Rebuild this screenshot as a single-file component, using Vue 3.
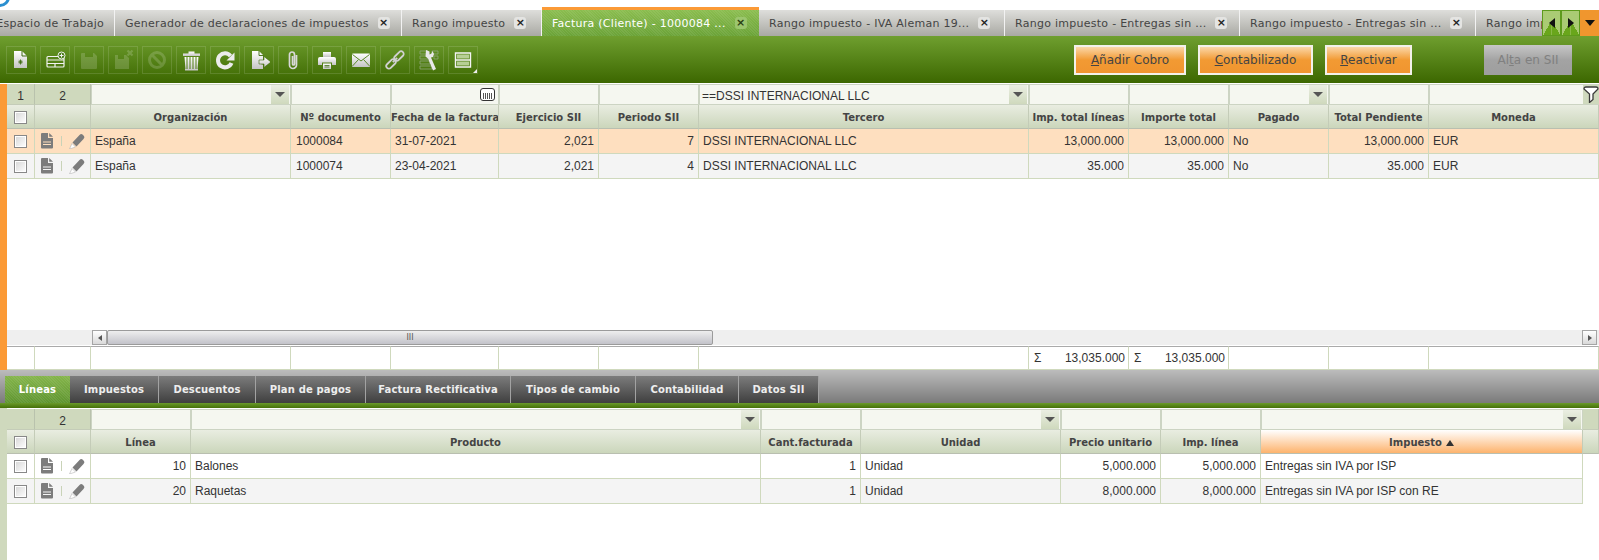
<template>
  <div class="page">
    <svg class="defs" width="0" height="0">
      <defs>
        <linearGradient id="ig" x1="0" y1="0" x2="0" y2="1">
          <stop offset="0" stop-color="#ffffff" />
          <stop offset="1" stop-color="#c4c4c4" />
        </linearGradient>
      </defs>
    </svg>

    <div class="top-strip"><span class="logo-arc"></span></div>

    <!-- Pestañas principales -->
    <div class="tabs">
      <div
        v-for="tab in windowTabs"
        :key="tab.title"
        class="tab"
        :class="{ active: tab.active, first: tab.first }"
        :style="{ width: tab.width + 'px' }"
      >
        <span class="tab-title">{{ tab.title }}</span>
        <span v-if="!tab.first" class="tab-close">×</span>
      </div>
      <div class="tab-nav">
        <span class="nav-btn"><i class="tri left"></i></span>
        <span class="nav-btn"><i class="tri right"></i></span>
        <span class="nav-btn menu"><i class="tri down"></i></span>
      </div>
    </div>

    <!-- Barra de herramientas -->
    <div class="toolbar">
      <div class="tool-group">
        <button v-for="tool in tools" :key="tool.name" class="tool" :class="{ corner: tool.corner }">
          <svg width="22" height="22" viewBox="0 0 22 22">
            <g :opacity="tool.dim ? 0.17 : 1">
              <path
                v-for="(p, i) in tool.paths"
                :key="i"
                :d="p.d"
                :fill="p.fill || 'none'"
                :stroke="p.stroke || 'none'"
                :stroke-width="p.w || 1"
                :fill-rule="p.rule || 'nonzero'"
              />
            </g>
          </svg>
        </button>
      </div>
      <div class="actions">
        <button class="action" style="width: 112px"><u>A</u>ñadir Cobro</button>
        <button class="action" style="width: 115px"><u>C</u>ontabilizado</button>
        <button class="action" style="width: 87px"><u>R</u>eactivar</button>
        <button class="action off">Al<u>t</u>a en SII</button>
      </div>
    </div>

    <!-- Cabecera -->
    <div class="master">
      <div class="stripe orange"></div>
      <div class="panel">
        <table class="grid" :style="{ width: masterWidth + 'px' }">
          <colgroup>
            <col v-for="c in masterCols" :key="c.key" :style="{ width: c.w + 'px' }" />
          </colgroup>
          <tr class="filter">
            <td class="lvl">1</td>
            <td class="lvl">2</td>
            <td v-for="c in masterCols.slice(2)" :key="c.key" class="f">
              <div class="f-in" :class="{ last: c.funnel }">
                <span class="f-val">{{ c.filter }}</span>
                <span v-if="c.combo" class="combo"><i class="tri down small"></i></span>
                <span v-if="c.cal" class="cal"><i></i></span>
                <span v-if="c.funnel" class="funnel">
                  <svg width="16" height="17" viewBox="0 0 16 17">
                    <path d="M1 3q0-2 2-2h10q2 0 2 2l-5 5v5.500l-3.500 3V8z" fill="#fff" stroke="#3a3a3a" stroke-width="1.300" />
                  </svg>
                </span>
              </div>
            </td>
          </tr>
          <tr class="head">
            <th><span class="chk"></span></th>
            <th></th>
            <th v-for="c in masterCols.slice(2)" :key="c.key">{{ c.label }}</th>
          </tr>
          <tr v-for="(row, r) in masterRows" :key="r" class="row" :class="{ sel: r === 0, alt: r === 1 }">
            <td class="ctr"><span class="chk"></span></td>
            <td class="rowtools">
              <div class="rt">
                <svg width="13" height="16" viewBox="0 0 13 16"><path :d="docIcon" fill="#7c7c7c" fill-rule="evenodd" /></svg>
                <i class="sep"></i>
                <svg width="16" height="16" viewBox="0 0 16 16"><path :d="pencilBody" fill="#7c7c7c" /><path d="M3 10.500L6.500 14 .5 16z" fill="#fff" stroke="#a8a8a8" stroke-width=".5" /></svg>
              </div>
            </td>
            <td v-for="c in masterCols.slice(2)" :key="c.key" :class="{ num: c.num, ind: c.ind }">{{ row[c.key] }}</td>
          </tr>
        </table>
        <div class="blank"></div>
        <div class="hscroll">
          <span class="sb-btn"><i class="tri left tiny"></i></span>
          <span class="sb-thumb"><em>III</em></span>
          <span class="sb-track"></span>
          <span class="sb-btn end"><i class="tri right tiny"></i></span>
        </div>
        <table class="grid summary" :style="{ width: masterWidth + 'px' }">
          <colgroup>
            <col v-for="c in masterCols" :key="c.key" :style="{ width: c.w + 'px' }" />
          </colgroup>
          <tr>
            <td v-for="c in masterCols" :key="c.key">
              <div v-if="c.sum" class="sum"><span>Σ</span><span>{{ c.sum }}</span></div>
            </td>
          </tr>
        </table>
      </div>
    </div>

    <!-- Pestañas de detalle -->
    <div class="subtabs">
      <div
        v-for="(t, i) in subTabs"
        :key="t.label"
        class="subtab"
        :class="{ active: i === 0 }"
        :style="{ width: t.w + 'px' }"
      >{{ t.label }}</div>
    </div>
    <div class="subline"></div>

    <!-- Líneas -->
    <div class="detail">
      <div class="stripe pale"></div>
      <div class="panel">
        <table class="grid" :style="{ width: detailWidth + 'px' }">
          <colgroup>
            <col v-for="c in detailCols" :key="c.key" :style="{ width: c.w + 'px' }" />
            <col style="width: 16px" />
          </colgroup>
          <tr class="filter">
            <td class="lvl"></td>
            <td class="lvl">2</td>
            <td v-for="c in detailCols.slice(2)" :key="c.key" class="f">
              <div class="f-in">
                <span v-if="c.combo" class="combo"><i class="tri down small"></i></span>
              </div>
            </td>
            <td class="lvl"></td>
          </tr>
          <tr class="head">
            <th><span class="chk"></span></th>
            <th></th>
            <th v-for="c in detailCols.slice(2)" :key="c.key" :class="{ sorted: c.sorted }">
              {{ c.label }}<span v-if="c.sorted" class="sort-up"></span>
            </th>
            <th></th>
          </tr>
          <tr v-for="(row, r) in detailRows" :key="r" class="row" :class="{ alt: r === 1 }">
            <td class="ctr"><span class="chk"></span></td>
            <td class="rowtools">
              <div class="rt">
                <svg width="13" height="16" viewBox="0 0 13 16"><path :d="docIcon" fill="#7c7c7c" fill-rule="evenodd" /></svg>
                <i class="sep"></i>
                <svg width="16" height="16" viewBox="0 0 16 16"><path :d="pencilBody" fill="#7c7c7c" /><path d="M3 10.500L6.500 14 .5 16z" fill="#fff" stroke="#a8a8a8" stroke-width=".5" /></svg>
              </div>
            </td>
            <td v-for="c in detailCols.slice(2)" :key="c.key" :class="{ num: c.num }">{{ row[c.key] }}</td>
            <td class="none"></td>
          </tr>
        </table>
      </div>
    </div>
  </div>
</template>

<script setup>
const docIcon = 'M0 1a1 1 0 011-1h6v5h5v9.500a1 1 0 01-1 1H1a1 1 0 01-1-1z M8.200 0L12 3.800H8.200z M2 8.500h8v1H2z M2 11h8v1H2z'
const pencilBody = 'M3.500 9.500L10.500 2Q12 .5 13.500 1.500L15 3Q16 4.500 14.500 6L7.500 13.500z'

const windowTabs = [
  { title: 'Espacio de Trabajo', width: 115, first: true },
  { title: 'Generador de declaraciones de impuestos', width: 287 },
  { title: 'Rango impuesto', width: 140 },
  { title: 'Factura (Cliente) - 1000084 ...', width: 217, active: true },
  { title: 'Rango impuesto - IVA Aleman 19...', width: 246 },
  { title: 'Rango impuesto - Entregas sin ...', width: 235 },
  { title: 'Rango impuesto - Entregas sin ...', width: 236 },
  { title: 'Rango impuesto', width: 123 }
]

const g = 'url(#ig)'
const tools = [
  { name: 'new', paths: [
    { d: 'M4 2h8l5 5v12H4z', fill: g },
    { d: 'M12 2v5h5', stroke: '#3f6b12', w: 1 },
    { d: 'M10.500 10.500v5M8.200 13h4.600M8.800 11.400l3.400 3.200M12.200 11.400l-3.400 3.200', stroke: '#3f6b12', w: 0.9 }
  ] },
  { name: 'grid', paths: [
    { d: 'M4 7.500h15a1 1 0 011 1V17a1 1 0 01-1 1H4a1 1 0 01-1-1V8.500a1 1 0 011-1zM3 11h17M3 14.500h17M11 18V14.500', stroke: '#f2f2f2', w: 1.2 },
    { d: 'M17.500 3a3.500 3.500 0 110 7 3.500 3.500 0 010-7z', fill: '#4b7c18', stroke: '#f2f2f2', w: 1 },
    { d: 'M17.500 4.500v4M15.500 6.500h4', stroke: '#f2f2f2', w: 1 }
  ] },
  { name: 'save', dim: true, paths: [
    { d: 'M4 4h12l3 3v12a1 1 0 01-1 1H4a1 1 0 01-1-1V5a1 1 0 011-1zM7 4v4h8V4z', fill: '#fff', rule: 'evenodd' }
  ] },
  { name: 'savex', dim: true, paths: [
    { d: 'M3 6h11l3 3v11H3zM6 6v4h6V6z', fill: '#fff', rule: 'evenodd' },
    { d: 'M15.500 1.500l5 5M20.500 1.500l-5 5', stroke: '#fff', w: 2.2 }
  ] },
  { name: 'stop', dim: true, paths: [
    { d: 'M11 3.500a7.500 7.500 0 110 15 7.500 7.500 0 010-15zM5.800 5.800l10.400 10.400', stroke: '#fff', w: 3 }
  ] },
  { name: 'trash', paths: [
    { d: 'M3 4.500h17V7H3zM8.500 2.500h6v2h-6z', fill: g },
    { d: 'M4.500 8h2v13h-1zM7.500 8h2v13h-2zM10.500 8h2v13h-2zM13.500 8h2v13h-2zM16.500 8h2l-1 13h-1zM5 20h13v1.500H5z', fill: g }
  ] },
  { name: 'reload', paths: [
    { d: 'M17.500 14a7 7 0 11-1-7', stroke: '#ececec', w: 4 },
    { d: 'M20.500 3.500v8h-8z', fill: '#ececec' }
  ] },
  { name: 'export', paths: [
    { d: 'M4 2h7l4 4v5h-1.500v4.500H15V20H4z', fill: g },
    { d: 'M11 2v4.500h4.500', stroke: '#3f6b12', w: 0.9 },
    { d: 'M11 11h5V7.500l7 5.500-7 5.500V15h-5z', fill: g, stroke: '#3f6b12', w: 0.6 }
  ] },
  { name: 'clip', paths: [
    { d: 'M14.500 6v10a3.500 3.500 0 01-7 0V5.500a2.500 2.500 0 015 0V15a1 1 0 01-2 0V7', stroke: '#d8d8d8', w: 1.7 }
  ] },
  { name: 'print', paths: [
    { d: 'M7 3h8v5H7z', fill: g },
    { d: 'M4 8h14a2 2 0 012 2v6h-4v-2.500H6V16H2v-6a2 2 0 012-2z', fill: g },
    { d: 'M7 14.500h8V20H7z', fill: g },
    { d: 'M8.500 16.500h5M8.500 18h5', stroke: '#3f6b12', w: 0.8 }
  ] },
  { name: 'mail', paths: [
    { d: 'M2 5.500a1 1 0 011-1h16a1 1 0 011 1V17a1 1 0 01-1 1H3a1 1 0 01-1-1z', fill: g },
    { d: 'M2.500 5.500L11 12l8.500-6.500M2.500 17l6-6.500M19.500 17l-6-6.500', stroke: '#5b8a28', w: 1 }
  ] },
  { name: 'link', paths: [
    { d: 'M6.740 18.940L10.940 14.740A2.600 2.600 0 007.260 11.060L3.060 15.260A2.600 2.600 0 006.740 18.940z', stroke: '#d0d0d0', w: 1.8 },
    { d: 'M14.740 10.940L18.940 6.740A2.600 2.600 0 0015.260 3.060L11.060 7.260A2.600 2.600 0 0014.740 10.940z', stroke: '#d0d0d0', w: 1.8 },
    { d: 'M8.800 13.200l4.400-4.400', stroke: '#d0d0d0', w: 1.8 }
  ] },
  { name: 'tools', paths: [
    { d: 'M2 2h8v3H2zM2 7h8v3H2zM2 12h10v3H2zM2 17h12v3H2zM14 2h6v3h-6zM16 7h4v3h-4z', stroke: '#8fa67c', w: 0.8 },
    { d: 'M8 1l3.500 1.500v3l2-1 1-2.500 1.500 3-1 3-2 .5 5 11.500-3 1.500-5-12-2.500-2z', fill: '#e8e8e8' }
  ] },
  { name: 'split', corner: true, paths: [
    { d: 'M3.500 4h15v14h-15zM3.500 11h15', stroke: '#f4f4f4', w: 1.4 },
    { d: 'M5 5.500h12v4H5zM5 12.500h12v4H5z', fill: '#b7cf95' }
  ] }
]

// Columnas de la cabecera
const masterCols = [
  { key: 'c', w: 28 },
  { key: 't', w: 56 },
  { key: 'org', w: 200, label: 'Organización', combo: true },
  { key: 'doc', w: 100, label: 'Nº documento', ind: true },
  { key: 'fecha', w: 108, label: 'Fecha de la factura', cal: true },
  { key: 'ej', w: 100, label: 'Ejercicio SII', num: true },
  { key: 'per', w: 100, label: 'Periodo SII', num: true },
  { key: 'ter', w: 330, label: 'Tercero', combo: true, filter: '==DSSI INTERNACIONAL LLC' },
  { key: 'lin', w: 100, label: 'Imp. total líneas', num: true, sum: '13,035.000' },
  { key: 'tot', w: 100, label: 'Importe total', num: true, sum: '13,035.000' },
  { key: 'pag', w: 100, label: 'Pagado', combo: true },
  { key: 'pen', w: 100, label: 'Total Pendiente', num: true },
  { key: 'mon', w: 170, label: 'Moneda', funnel: true }
]
const masterWidth = masterCols.reduce((a, c) => a + c.w, 0)

const masterRows = [
  { org: 'España', doc: '1000084', fecha: '31-07-2021', ej: '2,021', per: '7', ter: 'DSSI INTERNACIONAL LLC', lin: '13,000.000', tot: '13,000.000', pag: 'No', pen: '13,000.000', mon: 'EUR' },
  { org: 'España', doc: '1000074', fecha: '23-04-2021', ej: '2,021', per: '4', ter: 'DSSI INTERNACIONAL LLC', lin: '35.000', tot: '35.000', pag: 'No', pen: '35.000', mon: 'EUR' }
]

const subTabs = [
  { label: 'Líneas', w: 65 },
  { label: 'Impuestos', w: 89 },
  { label: 'Descuentos', w: 97 },
  { label: 'Plan de pagos', w: 110 },
  { label: 'Factura Rectificativa', w: 145 },
  { label: 'Tipos de cambio', w: 125 },
  { label: 'Contabilidad', w: 103 },
  { label: 'Datos SII', w: 80 }
]

// Columnas de las líneas
const detailCols = [
  { key: 'c', w: 28 },
  { key: 't', w: 56 },
  { key: 'lin', w: 100, label: 'Línea', num: true },
  { key: 'prod', w: 570, label: 'Producto', combo: true },
  { key: 'cant', w: 100, label: 'Cant.facturada', num: true },
  { key: 'uni', w: 200, label: 'Unidad', combo: true },
  { key: 'pre', w: 100, label: 'Precio unitario', num: true },
  { key: 'imp', w: 100, label: 'Imp. línea', num: true },
  { key: 'tax', w: 322, label: 'Impuesto', combo: true, sorted: true }
]
const detailWidth = detailCols.reduce((a, c) => a + c.w, 0) + 16

const detailRows = [
  { lin: '10', prod: 'Balones', cant: '1', uni: 'Unidad', pre: '5,000.000', imp: '5,000.000', tax: 'Entregas sin IVA por ISP' },
  { lin: '20', prod: 'Raquetas', cant: '1', uni: 'Unidad', pre: '8,000.000', imp: '8,000.000', tax: 'Entregas sin IVA por ISP con RE' }
]
</script>

<style scoped>
.page {
  width: 1599px;
  height: 560px;
  overflow: hidden;
  background: #fff;
  font-family: "Liberation Sans", Arial, sans-serif;
  font-size: 12px;
  color: #333;
}

.defs {
  position: absolute;
}

.top-strip {
  height: 10px;
  position: relative;
  overflow: hidden;
}

.logo-arc {
  position: absolute;
  left: -10px;
  top: -13px;
  width: 14px;
  height: 14px;
  border: 3px solid #2a8fd0;
  border-radius: 50%;
}

/* Pestañas */
.tabs {
  height: 26px;
  display: flex;
  position: relative;
  background: #b3b3ad;
  font-family: "DejaVu Sans", sans-serif;
  font-size: 11px;
  letter-spacing: 0.27px;
}

.tab {
  flex: none;
  box-sizing: border-box;
  display: flex;
  align-items: center;
  gap: 9px;
  padding-left: 10px;
  height: 26px;
  white-space: nowrap;
  overflow: hidden;
  color: #444;
  background: linear-gradient(#dededb, #a9a9a3);
  border-right: 1px solid #f2f2f2;
}

.tab.first {
  padding-left: 0;
  direction: rtl;
  padding-right: 10px;
}

.tab.active {
  color: #fff;
  background: repeating-linear-gradient(45deg, rgba(255, 255, 255, 0.07) 0 1px, transparent 1px 2px), linear-gradient(#8bbd4f, #6ba338);
  border-right: none;
  position: relative;
  overflow: visible;
}

/* Marca naranja sobre la pestaña activa */
.tab.active::before {
  content: "";
  position: absolute;
  left: 0;
  right: 0;
  top: -3px;
  height: 3px;
  background: #fb9a36;
}

.tab-close {
  width: 12px;
  height: 12px;
  border-radius: 3px;
  background: #e4e4e2;
  color: #222;
  font-size: 11px;
  font-weight: bold;
  line-height: 11px;
  text-align: center;
  flex: none;
  letter-spacing: 0;
}

.tab.active .tab-close {
  background: #9cc66e;
  color: #2a3d12;
}

.tab-nav {
  position: absolute;
  right: 0;
  top: 0;
  display: flex;
}

.nav-btn {
  width: 19px;
  height: 26px;
  box-sizing: border-box;
  border: 1px solid #5d9a1c;
  background:
    linear-gradient(to bottom right, transparent 50%, #69a61b 50%) left bottom / 50% 60% no-repeat,
    linear-gradient(to bottom left, transparent 50%, #69a61b 50%) right bottom / 50% 60% no-repeat,
    #aacb74;
  display: flex;
  align-items: center;
  justify-content: center;
}

.nav-btn.menu {
  border-color: #f0962e;
  background: #f0962e;
}

.tri {
  display: block;
  width: 0;
  height: 0;
  border-style: solid;
  border-color: transparent;
}

.tri.left {
  border-width: 5px 6px 5px 0;
  border-right-color: #111;
}

.tri.right {
  border-width: 5px 0 5px 6px;
  border-left-color: #111;
}

.tri.down {
  border-width: 6px 5px 0;
  border-top-color: #111;
}

.tri.small {
  border-width: 5px 5px 0;
  border-top-color: #555;
}

.tri.tiny {
  border-width: 3px 4px 3px 0;
  border-right-color: #555;
}

.tri.tiny.right {
  border-width: 3px 0 3px 4px;
  border-left-color: #555;
  border-right-color: transparent;
}

/* Barra de herramientas */
.toolbar {
  height: 47px;
  box-sizing: border-box;
  display: flex;
  align-items: flex-start;
  justify-content: space-between;
  padding: 9px 27px 0 6px;
  background: linear-gradient(#6f9f2f, #3c6700);
  margin-bottom: 1px;
}

.tool-group {
  display: flex;
  gap: 4px;
  margin-top: 1px;
}

.tool {
  width: 30px;
  height: 28px;
  box-sizing: border-box;
  padding: 0;
  background: none;
  border: 1px solid rgba(255, 255, 255, 0.13);
  display: flex;
  align-items: center;
  justify-content: center;
  position: relative;
}

.tool.corner::after {
  content: "";
  position: absolute;
  right: 0;
  bottom: 0;
  border-style: solid;
  border-width: 0 0 4px 4px;
  border-color: transparent transparent #eee;
}

.actions {
  display: flex;
  gap: 12px;
}

.action {
  height: 30px;
  box-sizing: border-box;
  padding: 0;
  border: 2px solid #f3f1ea;
  background: linear-gradient(#fbd7a8, #f29a33 50%, #f09530);
  color: #444;
  font: 12px "DejaVu Sans", sans-serif;
}

.action.off {
  margin-left: 60px;
  border: none;
  width: 88px;
  background: linear-gradient(#c7c7c7, #a3a3a3 50%, #9e9e9e);
  color: #808080;
}

/* Cabecera */
.master {
  display: flex;
  height: 286px;
}

.stripe {
  flex: none;
  width: 7px;
}

.stripe.orange {
  background: #fb9a36;
}

.stripe.pale {
  background: #cfd9bd;
}

.panel {
  flex: 1;
  min-width: 0;
  display: flex;
  flex-direction: column;
  overflow: hidden;
}

.grid {
  table-layout: fixed;
  border-collapse: separate;
  border-spacing: 0;
}

.grid td,
.grid th {
  padding: 0;
  box-sizing: border-box;
  overflow: hidden;
  white-space: nowrap;
}

.filter td {
  height: 21px;
}

.filter td.lvl {
  padding-top: 3px;
  background: #cfd9bd;
  text-align: center;
  border-right: 1px solid #b9c2ad;
  border-bottom: 1px solid #c4ccb8;
}

.f {
  background: #ccd4c3;
}

.f-in {
  height: 19px;
  box-sizing: border-box;
  margin: 1px 1px 1px 1px;
  padding-left: 2px;
  background: #f5f7f0;
  display: flex;
  align-items: center;
  justify-content: space-between;
}

.f-in.last {
  margin-right: 0;
}

.f-val {
  margin-top: 2px;
}

.combo {
  width: 18px;
  height: 19px;
  flex: none;
  margin-left: auto;
  margin-right: 1px;
  background: linear-gradient(#eaeee2, #cfd9bd);
  display: flex;
  align-items: center;
  justify-content: center;
}

.cal {
  width: 15px;
  height: 13px;
  flex: none;
  margin-left: auto;
  margin-right: 3px;
  box-sizing: border-box;
  border: 1px solid #333;
  border-radius: 3px;
  background: #fff;
  display: flex;
  align-items: flex-end;
  justify-content: center;
}

.cal i {
  width: 9px;
  height: 6px;
  margin-bottom: 1px;
  background: repeating-linear-gradient(90deg, #555 0 1px, #fff 1px 2px);
}

.funnel {
  flex: none;
  margin-left: auto;
  height: 19px;
  background: #cfd9bd;
  display: flex;
  align-items: center;
}

.head th {
  height: 24px;
  padding-top: 2px;
  font: bold 10px "DejaVu Sans", sans-serif;
  color: #444;
  text-align: center;
  vertical-align: middle;
  background: linear-gradient(#e9ede1, #cbd6bb);
  border-right: 1px solid #c4ccb8;
  border-bottom: 1px solid #b9bfb0;
}

.head th.sorted {
  background: linear-gradient(#fff, #fdb36d);
}

.sort-up {
  display: inline-block;
  width: 0;
  height: 0;
  margin-left: 4px;
  border-style: solid;
  border-width: 0 4px 6px;
  border-color: transparent transparent #333;
}

.chk {
  display: block;
  width: 13px;
  height: 13px;
  margin: 0 auto;
  box-sizing: border-box;
  border: 1px solid #888;
  background: linear-gradient(135deg, #d6d6d6, #fff);
  box-shadow: inset 0 0 0 1px #fff;
}

.row td {
  height: 25px;
  padding: 0 4px;
  border-right: 1px solid #cfd9bd;
  border-bottom: 1px solid #cfd9bd;
  background: #fff;
  vertical-align: middle;
}

.row.sel td {
  background: #fedfbf;
}

.row.alt td {
  background: #f4f4f4;
}

.row td.none {
  background: none;
  border: none;
}

.row td.num {
  text-align: right;
}

.row td.ind {
  padding-left: 5px;
}

.row td.ctr {
  padding: 0;
}

.row td.rowtools {
  padding: 0;
}

.rt {
  display: flex;
  align-items: center;
  padding-left: 6px;
  gap: 7px;
}

.sep {
  width: 1px;
  height: 10px;
  background: #c9d3b8;
}

.blank {
  flex: 1;
}

.hscroll {
  height: 15px;
  display: flex;
  background: #efefef;
  margin-bottom: 1px;
  padding-left: 85px;
}

.sb-btn {
  width: 15px;
  height: 15px;
  box-sizing: border-box;
  border: 1px solid #a5a5a5;
  background: linear-gradient(#fff, #d9d9d9);
  display: flex;
  align-items: center;
  justify-content: center;
}

.sb-thumb {
  width: 606px;
  height: 15px;
  box-sizing: border-box;
  border: 1px solid #9b9b9b;
  border-radius: 2px;
  background: linear-gradient(#eeeeee, #c3c3ca);
  display: flex;
  align-items: center;
  justify-content: center;
}

.sb-thumb em {
  font: 8px "DejaVu Sans", sans-serif;
  color: #555;
}

.sb-track {
  flex: 1;
}

.sb-btn.end {
  margin-right: 2px;
}

.summary td {
  height: 24px;
  border-top: 1px solid #aaa;
  border-right: 1px solid #cfd9bd;
  border-bottom: 1px solid #cfd9bd;
}

.sum {
  display: flex;
  justify-content: space-between;
  padding: 0 3px 0 5px;
}

/* Pestañas de detalle */
.subtabs {
  height: 33px;
  box-sizing: border-box;
  padding: 6px 0 0 5px;
  display: flex;
  background: linear-gradient(#bcbcbc, #7a7a7a);
}

.subtab {
  flex: none;
  box-sizing: border-box;
  height: 27px;
  text-align: center;
  color: #eeeeee;
  font: bold 10px/27px "DejaVu Sans", sans-serif;
  letter-spacing: 0.15px;
  background: linear-gradient(#7c7c7c, #3f3f3f);
  border-right: 1px solid #a2a2a2;
}

.subtab.active {
  color: #fff;
  background: repeating-linear-gradient(45deg, rgba(255, 255, 255, 0.07) 0 1px, transparent 1px 2px), linear-gradient(#85b54b, #5f9530);
  border-right: none;
}

.subline {
  height: 5px;
  background: linear-gradient(#6a9a2a, #447008);
}

/* Líneas */
.detail {
  display: flex;
  height: 152px;
}

.detail .panel {
  padding-top: 1px;
}
</style>
